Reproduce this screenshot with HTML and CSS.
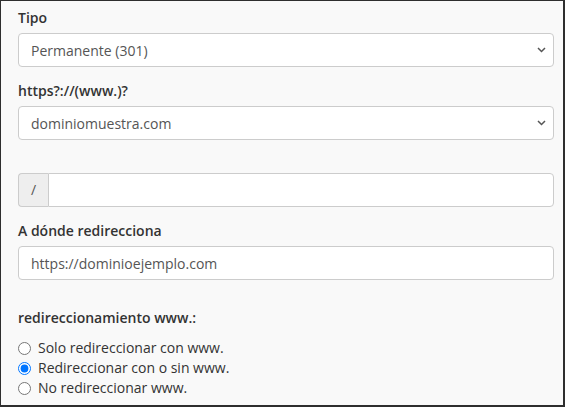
FILE: index.html
```html
<!DOCTYPE html>
<html lang="es">
  <head>
    <meta charset="UTF-8" />
    <meta name="viewport" content="width=device-width, initial-scale=1.0" />
    <title>Redirecciones</title>
    <link rel="stylesheet" href="styles.css">
  </head>
  <body>
    <div class="frame">
      <form class="redirect-form">
        <div class="form-group">
          <label for="tipo">Tipo</label>
          <div class="select-wrap">
            <select id="tipo" class="form-control">
              <option>Permanente (301)</option>
              <option>Temporal (302)</option>
            </select>
            <svg class="chevron" width="9" height="6" viewBox="0 0 9 6">
              <path d="M1 1 L4.5 4.5 L8 1" fill="none" stroke="#555" stroke-width="1.5" />
            </svg>
          </div>
        </div>

        <div class="form-group">
          <label for="dominio">https?://(www.)?</label>
          <div class="select-wrap">
            <select id="dominio" class="form-control">
              <option>dominiomuestra.com</option>
            </select>
            <svg class="chevron" width="9" height="6" viewBox="0 0 9 6">
              <path d="M1 1 L4.5 4.5 L8 1" fill="none" stroke="#555" stroke-width="1.5" />
            </svg>
          </div>
        </div>

        <div class="form-group path-group">
          <div class="input-group">
            <span class="addon">/</span>
            <input type="text" class="form-control" id="ruta" />
          </div>
        </div>

        <div class="form-group">
          <label for="destino">A dónde redirecciona</label>
          <input type="text" class="form-control" id="destino" value="https://dominioejemplo.com" />
        </div>

        <div class="form-group www-group">
          <label>redireccionamiento www.:</label>
          <div class="radios">
            <label class="radio"><input type="radio" name="www" /> Solo redireccionar con www.</label>
            <label class="radio"><input type="radio" name="www" checked /> Redireccionar con o sin www.</label>
            <label class="radio"><input type="radio" name="www" /> No redireccionar www.</label>
          </div>
        </div>
      </form>
    </div>
  </body>
</html>
```

FILE: styles.css
```css
* {
  margin: 0;
  padding: 0;
  box-sizing: border-box;
}

body {
  font-family: "Open Sans", "Noto Sans", sans-serif;
  font-size: 14px;
  line-height: 20px;
  color: #333;
  background: #fff;
}

.frame {
  width: 565px;
  height: 407px;
  background: #f9f9f9;
  border: 1px solid #2e2e2e;
  border-right-width: 2px;
  border-bottom-width: 2px;
  padding: 7px 0 0 17px;
  overflow: hidden;
}

.redirect-form {
  width: 536px;
}

.form-group {
  margin-bottom: 14px;
}

.form-group > label {
  display: block;
  font-weight: 600;
  margin-bottom: 5px;
}

.form-control {
  display: block;
  width: 100%;
  height: 34px;
  padding: 6px 12px;
  font-family: inherit;
  font-size: 14px;
  color: #555;
  background: #fff;
  border: 1px solid #ccc;
  border-radius: 4px;
  outline: none;
}

.select-wrap {
  position: relative;
}

.select-wrap select {
  appearance: none;
  -webkit-appearance: none;
}

.chevron {
  position: absolute;
  right: 8px;
  top: 14px;
  pointer-events: none;
}

.path-group {
  padding-top: 19px;
}

.input-group {
  display: flex;
}

.addon {
  width: 30px;
  height: 34px;
  line-height: 32px;
  text-align: center;
  color: #555;
  background: #eee;
  border: 1px solid #ccc;
  border-right: none;
  border-radius: 4px 0 0 4px;
}

.input-group .form-control {
  flex: 1;
  border-radius: 0 4px 4px 0;
}

.www-group {
  padding-top: 14px;
}

.www-group > label {
  margin-bottom: 10px;
}

.radio {
  display: flex;
  align-items: center;
  gap: 7px;
  height: 20px;
}

.radio input {
  width: 13px;
  height: 13px;
  margin: 1px 0 0 0;
}
```
